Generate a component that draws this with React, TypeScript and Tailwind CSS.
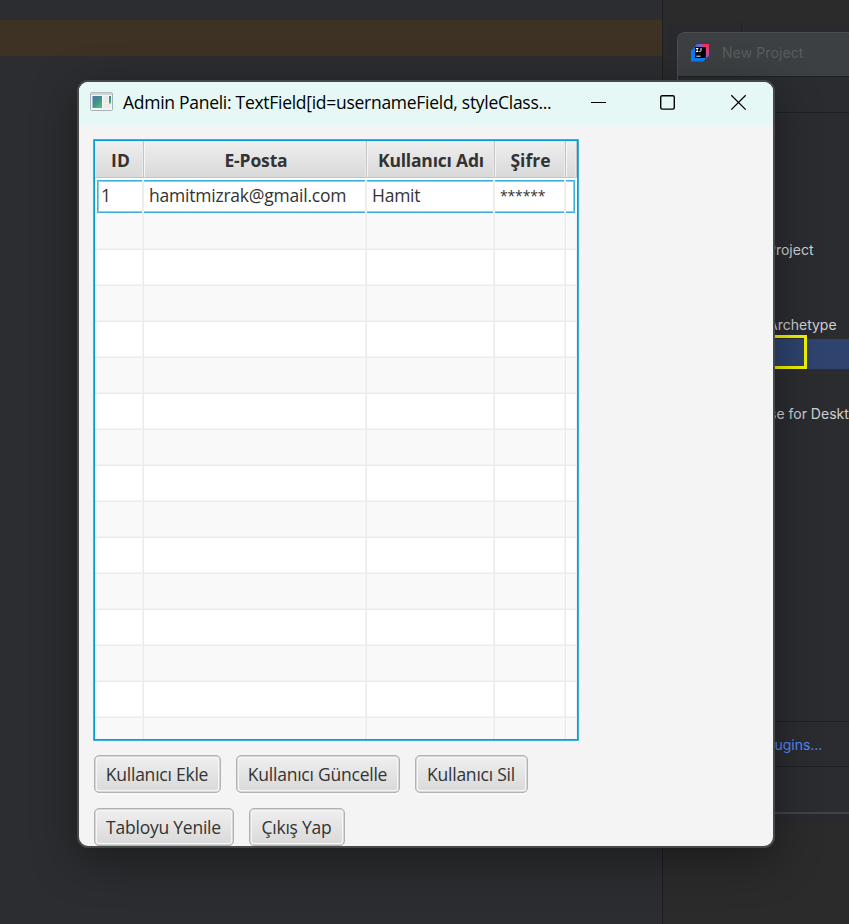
const rows = Array.from({ length: 15 }, (_, i) => i);

const columns = [
  { title: 'ID', width: 'w-[49px]', style: 'pl-[3px] tracking-[0.2px]' },
  { title: 'E-Posta', width: 'w-[223px]', style: 'pl-[2px] tracking-[-0.15px]' },
  { title: 'Kullanıcı Adı', width: 'w-[128px]', style: 'pl-px tracking-[-0.2px]' },
  { title: 'Şifre', width: 'w-[71px]', style: 'pl-px tracking-[0px]' },
  { title: '', width: 'w-[11px]', style: '' },
];

const cells = [
  { text: '1', width: 'w-[46px]', style: 'pl-[3px] pb-[3px] text-[17.5px]' },
  { text: 'hamitmizrak@gmail.com', width: 'w-[223px]', style: 'pl-[5px] pb-[3px] text-[17.5px] tracking-[-0.22px]' },
  { text: 'Hamit', width: 'w-[128px]', style: 'pl-[5px] pb-[3px] text-[17.5px] tracking-[-0.25px]' },
  { text: '******', width: 'w-[71px]', style: 'pl-[5px] pb-[4px] text-[14px] tracking-[-0.15px]' },
];

function Button({ label, width }: { label: string; width: string }) {
  return (
    <button
      className={`flex h-[38px] shrink-0 items-center justify-center rounded-[5px] border border-[#b2b2b2] bg-linear-to-b from-[#efefef] to-[#d9d9d9] pt-px pr-px text-[17.5px] tracking-[-0.23px] whitespace-nowrap text-[#333] shadow-[inset_0_0_0_0.5px_#b9b9b9,inset_0_0_0_2px_#f5f5f5,0_2px_0_#f8f8f8] ${width}`}
    >
      {label}
    </button>
  );
}

function IdeaLogo() {
  return (
    <svg className="-mt-[4px] ml-[12px] block" width="20" height="20" viewBox="0 0 20 20">
      <defs>
        <linearGradient id="pink" x1="0" y1="0.2" x2="1" y2="0.2">
          <stop offset="0" stopColor="#087cfa" />
          <stop offset="0.45" stopColor="#8f5bbd" />
          <stop offset="0.8" stopColor="#fe2857" />
        </linearGradient>
        <linearGradient id="violet" x1="0" y1="0" x2="0" y2="1">
          <stop offset="0" stopColor="#fe2857" />
          <stop offset="0.5" stopColor="#d04a8c" />
          <stop offset="1" stopColor="#6b57ff" />
        </linearGradient>
      </defs>
      <path d="M7 1H19V5H4Z" fill="url(#pink)" />
      <path d="M14 1H19V13L14 17Z" fill="url(#violet)" />
      <path d="M1 7.5L5 4.5V15H16L13.5 18.5H1Z" fill="#087cfa" />
      <path d="M5 4H15.8V15H5Z" fill="#000" />
      <path d="M6 5.5H8.4M7.2 5.5V8.6M6 8.6H8.4M11 5V7.6Q11 8.6 9.2 8.5M6.3 13.2H10.5" stroke="#fff" strokeWidth="1" fill="none" />
    </svg>
  );
}

function NewProjectWindow() {
  return (
    <div className="absolute top-8 left-[677px] h-[782px] w-[172px] overflow-hidden rounded-tl-[8px] border-t border-b-2 border-l border-[#4b4e50] border-b-[#414345] bg-[#2b2c30] font-[Inter,sans-serif] text-[14px] whitespace-nowrap text-[#cfd0d3]">
      <div className="flex h-[44px] items-center border-b border-[#1e1f22] bg-[#3c4042]">
        <IdeaLogo />
        <span className="-mt-[4px] ml-[12px] text-[14px] tracking-[0.1px] text-[#5a5d60]">New Project</span>
      </div>
      <div className="h-[36px] border-b border-[#1f2024]" />
      <div className="flex h-[609px] flex-col border-b border-[#1f2024]">
        <div className="mt-[127px] h-[20px] pl-[89px] leading-[20px]">Project</div>
        <div className="mt-[55px] h-[20px] pl-[90px] leading-[20px]">Archetype</div>
        <div className="mt-[4px] h-[30px] bg-[#2e436e]">
          <div className="h-[34px] w-[129px] translate-y-[-4px] border-[3.5px] border-[#f2f200]" />
        </div>
        <div className="mt-[35px] h-[20px] pl-[91px] leading-[20px]">se for Deskt</div>
      </div>
      <div className="flex h-[45px] items-center border-b border-[#1f2024] pt-px pl-[93px] text-[#548af7]">lugins...</div>
    </div>
  );
}

function AppIcon() {
  return (
    <svg className="-mt-[3px] ml-[11px] block" width="23" height="20" viewBox="0 0 23 20">
      <defs>
        <linearGradient id="pane" x1="0" y1="0" x2="0.7" y2="1">
          <stop offset="0" stopColor="#4b79a8" />
          <stop offset="0.55" stopColor="#3f918d" />
          <stop offset="1" stopColor="#5cb779" />
        </linearGradient>
      </defs>
      <rect x="0.5" y="0.7" width="22" height="17.8" rx="1" fill="#f5f5f5" stroke="#a8b1b5" />
      <path d="M1 1.9H22" stroke="#c3cbd0" strokeWidth="1.5" />
      <rect x="2.5" y="4" width="9.5" height="12" fill="url(#pane)" />
      <rect x="13.5" y="4" width="4.5" height="7" fill="#e9e9ea" />
      <rect x="13.5" y="12" width="7" height="4" fill="#eaeaea" />
      <rect x="19" y="4" width="2" height="7.5" fill="url(#pane)" />
    </svg>
  );
}

function TitleBar() {
  return (
    <div className="flex h-[43px] items-center bg-[#e5f8f5] text-black">
      <AppIcon />
      <span className="-mt-[2px] ml-[10px] w-[467px] text-[17.5px] tracking-[-0.28px] whitespace-nowrap">
        Admin Paneli: TextField[id=usernameField, styleClass...
      </span>
      <svg className="-mt-[5px] block" width="168" height="20" viewBox="0 0 168 20" fill="none" stroke="#000">
        <path d="M1 11.5H16" />
        <rect x="70.7" y="4.7" width="13.6" height="13.4" rx="1.5" strokeWidth="1.4" />
        <path d="M141.3 4.2L155.7 18.6M155.7 4.2L141.3 18.6" strokeWidth="1.3" />
      </svg>
    </div>
  );
}

function UserTable() {
  return (
    <div className="h-[602px] w-[486px] border border-[#75c7e4]">
      <div className="flex h-full flex-col overflow-hidden border border-[#039ed3] bg-white shadow-[0_0_0_0.5px_#039ed3]">
        <div className="flex h-[37px] shrink-0 border-b border-[#c4c4c4]">
          {columns.map((c, i) => (
            <div
              key={i}
              className={`flex shrink-0 items-center justify-center border-r border-[#c4c4c4] bg-linear-to-b from-[#efefef] to-[#d9d9d9] pt-[3px] text-[17.5px] font-bold whitespace-nowrap text-[#333] shadow-[inset_1px_1px_0_#f6f6f6,inset_-1px_0_0_#e9e9e9] ${c.width} ${c.style}`}
            >
              {c.title}
            </div>
          ))}
        </div>
        <div className="flex h-[36px] shrink-0 pt-[2px] pl-[2px]">
          <div className="flex h-[33px] w-[478px] border border-[#3bb0d8] shadow-[inset_0_0_0_1px_#8fd0e6]">
            {cells.map((c) => (
              <div
                key={c.text}
                className={`-my-px flex shrink-0 items-center border-r-2 border-[#ededed] pt-px whitespace-nowrap text-[#333] ${c.width} ${c.style}`}
              >
                {c.text}
              </div>
            ))}
          </div>
        </div>
        {rows.map((r) => (
          <div key={r} className={`flex h-[36px] shrink-0 ${r % 2 === 0 ? 'bg-[#f9f9f9]' : 'bg-white'}`}>
            {columns.map((c, i) => (
              <div
                key={i}
                className={`shrink-0 border-b border-[#ececec] shadow-[inset_-1px_-1px_0_#f3f3f3] ${i < 4 ? 'border-r' : ''} ${c.width}`}
              />
            ))}
          </div>
        ))}
      </div>
    </div>
  );
}

export default function App() {
  return (
    <div className="relative h-[924px] w-[849px] overflow-hidden bg-[#2b2d30] font-['Open_Sans','Noto_Sans',sans-serif]">
      <div className="flex h-full">
        <div className="w-[662px] pt-5">
          <div className="h-9 bg-[#3d3223]" />
        </div>
        <div className="flex grow flex-col border-l border-[#1e1f22] bg-[#2b2b2b]">
          <div className="mt-[23px] ml-[4px] flex h-[801px] bg-[#292a2e]">
            <div className="w-[75px] border-r border-[#202124]" />
          </div>
        </div>
      </div>

      <NewProjectWindow />

      <div className="absolute top-20 left-[77px] h-[768px] w-[698px] overflow-hidden rounded-[11px] border-2 border-[#464849] bg-[#f4f4f4] shadow-[0_12px_45px_rgba(0,0,0,0.38)]">
        <TitleBar />
        <div className="flex flex-col pt-[14px] pl-[14px]">
          <UserTable />
          <div className="mt-[14px] ml-px flex gap-[15px]">
            <Button label="Kullanıcı Ekle" width="w-[127px]" />
            <Button label="Kullanıcı Güncelle" width="w-[164px]" />
            <Button label="Kullanıcı Sil" width="w-[113px]" />
          </div>
          <div className="mt-[15px] ml-px flex gap-[15px]">
            <Button label="Tabloyu Yenile" width="w-[140px]" />
            <Button label="Çıkış Yap" width="w-[96px]" />
          </div>
        </div>
      </div>
    </div>
  );
}
